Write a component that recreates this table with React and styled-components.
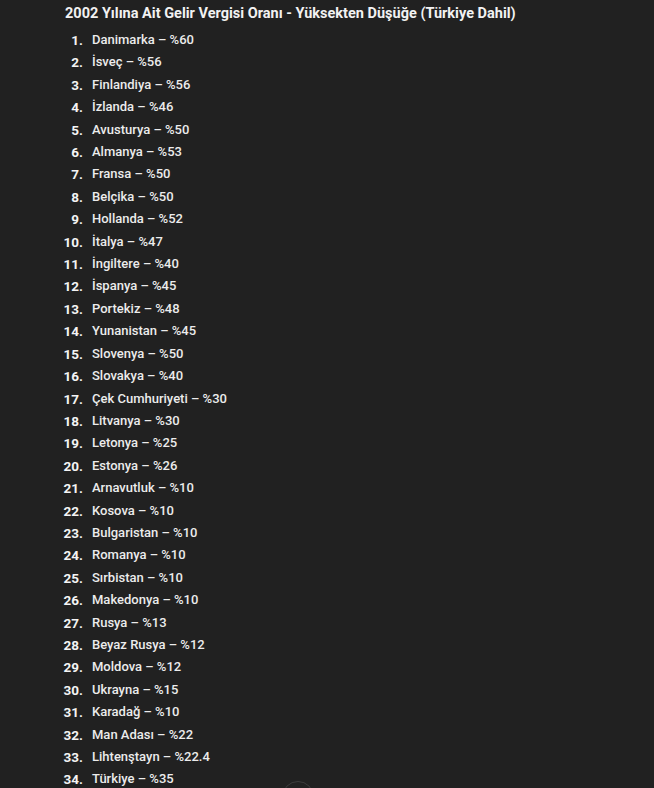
import React from "react";
import styled, { createGlobalStyle } from "styled-components";

const Global = createGlobalStyle`
  html, body { margin: 0; padding: 0; background: #212121; }
  body { font-family: Roboto, "Noto Sans", sans-serif; color: #ececec; }
`;

const Page = styled.main`
  position: relative;
  min-height: 788px;
  padding: 3px 0 0 52px;
  box-sizing: border-box;
  overflow: hidden;
`;

const Title = styled.h3`
  margin: 0 0 4px 0;
  padding-left: 13px;
  font-size: 14.5px;
  line-height: 22px;
  font-weight: 700;
  color: #f2f2f2;
`;

const List = styled.ol`
  list-style: none;
  margin: 0;
  padding: 0;
`;

const Item = styled.li`
  display: grid;
  grid-template-columns: 31px auto;
  column-gap: 9px;
  font-size: 13px;
  line-height: 22.4px;
  font-weight: 500;
  color: #ececec;
`;

const Num = styled.span`
  text-align: right;
  font-weight: 700;
  font-size: 13.5px;
  color: #f4f4f4;
`;

const ScrollButton = styled.button`
  position: absolute;
  left: 282px;
  top: 781px;
  width: 32px;
  height: 32px;
  border-radius: 50%;
  border: 1px solid #3c3c3c;
  background: #212121;
  padding: 0;
`;

const rows = [
  "Danimarka – %60",
  "İsveç – %56",
  "Finlandiya – %56",
  "İzlanda – %46",
  "Avusturya – %50",
  "Almanya – %53",
  "Fransa – %50",
  "Belçika – %50",
  "Hollanda – %52",
  "İtalya – %47",
  "İngiltere – %40",
  "İspanya – %45",
  "Portekiz – %48",
  "Yunanistan – %45",
  "Slovenya – %50",
  "Slovakya – %40",
  "Çek Cumhuriyeti – %30",
  "Litvanya – %30",
  "Letonya – %25",
  "Estonya – %26",
  "Arnavutluk – %10",
  "Kosova – %10",
  "Bulgaristan – %10",
  "Romanya – %10",
  "Sırbistan – %10",
  "Makedonya – %10",
  "Rusya – %13",
  "Beyaz Rusya – %12",
  "Moldova – %12",
  "Ukrayna – %15",
  "Karadağ – %10",
  "Man Adası – %22",
  "Lihtenştayn – %22.4",
  "Türkiye – %35",
];

export default function App() {
  return (
    <>
      <Global />
      <Page>
        <Title>2002 Yılına Ait Gelir Vergisi Oranı - Yüksekten Düşüğe (Türkiye Dahil)</Title>
        <List>
          {rows.map((r, i) => (
            <Item key={i}>
              <Num>{i + 1}.</Num>
              <span>{r}</span>
            </Item>
          ))}
        </List>
        <ScrollButton aria-label="Aşağı kaydır" />
      </Page>
    </>
  );
}
